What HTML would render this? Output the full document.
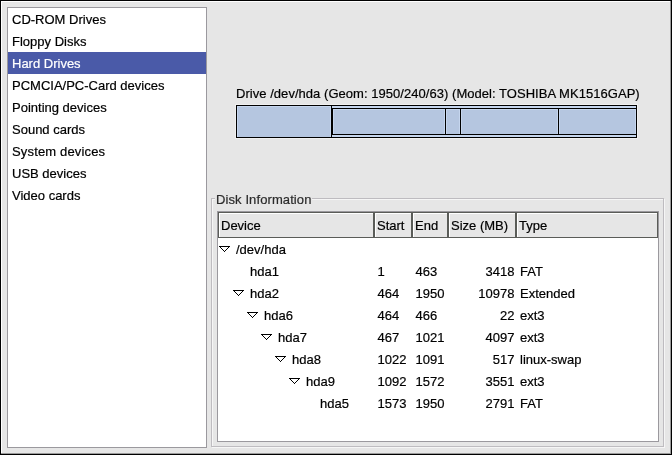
<!DOCTYPE html>
<html><head><meta charset="utf-8">
<style>
html,body{margin:0;padding:0}
body{will-change:transform;width:672px;height:455px;position:relative;overflow:hidden;background:#e6e6e6;font-family:"Liberation Sans",sans-serif;font-size:13px;color:#000}
.a{position:absolute}
.t{position:absolute;white-space:pre;line-height:22px;height:22px;-webkit-text-stroke:0.2px currentColor}
.r{text-align:right}
.hb{position:absolute;top:212px;height:24px;border:1px solid #5a5c58;background:#e6e6e6;box-shadow:1px 1px 0 #fff inset}
</style></head><body>
<div class="a" style="left:0px;top:0px;width:672px;height:1px;background:#000"></div>
<div class="a" style="left:0px;top:0px;width:1px;height:455px;background:#000"></div>
<div class="a" style="left:0px;top:454px;width:672px;height:1px;background:#000"></div>
<div class="a" style="left:671px;top:0px;width:1px;height:455px;background:#000"></div>
<div class="a" style="left:1px;top:1px;width:670px;height:1px;background:#fff"></div>
<div class="a" style="left:1px;top:1px;width:1px;height:453px;background:#fff"></div>
<div class="a" style="left:670px;top:1px;width:1px;height:453px;background:#9a9a9a"></div>
<div class="a" style="left:1px;top:453px;width:670px;height:1px;background:#9a9a9a"></div>
<div class="a" style="left:7px;top:7px;width:198px;height:439px;border:1px solid #9b999e;background:#fff"></div>
<div class="a" style="left:8px;top:52px;width:198px;height:22px;background:#4a5aa8"></div>
<div class="t" style="left:12px;top:9px;">CD-ROM Drives</div>
<div class="t" style="left:12px;top:31px;">Floppy Disks</div>
<div class="t" style="left:12px;top:53px;color:#fff">Hard Drives</div>
<div class="t" style="left:12px;top:75px;">PCMCIA/PC-Card devices</div>
<div class="t" style="left:12px;top:97px;">Pointing devices</div>
<div class="t" style="left:12px;top:119px;">Sound cards</div>
<div class="t" style="left:12px;top:141px;letter-spacing:0.16px">System devices</div>
<div class="t" style="left:12px;top:163px;">USB devices</div>
<div class="t" style="left:12px;top:185px;">Video cards</div>
<div class="t" style="left:236px;top:83px;letter-spacing:0.04px">Drive /dev/hda (Geom: 1950/240/63) (Model: TOSHIBA MK1516GAP)</div>
<svg class="a" style="left:0;top:0" width="672" height="455" shape-rendering="crispEdges"><rect x="235" y="104" width="403" height="35" fill="#f0f0f0"/><rect x="236" y="105" width="401" height="33" fill="#000"/><rect x="237" y="106" width="94" height="31" fill="#c6d6ee"/><rect x="238" y="107" width="92" height="30" fill="#b5c6e0"/><rect x="332" y="106" width="304" height="31" fill="#c6d6ee"/><rect x="332" y="108" width="305" height="27" fill="#000"/><rect x="333" y="109" width="112" height="25" fill="#c6d6ee"/><rect x="334" y="110" width="110" height="24" fill="#b5c6e0"/><rect x="446" y="109" width="14" height="25" fill="#c6d6ee"/><rect x="447" y="110" width="12" height="24" fill="#b5c6e0"/><rect x="461" y="109" width="97" height="25" fill="#c6d6ee"/><rect x="462" y="110" width="95" height="24" fill="#b5c6e0"/><rect x="559" y="109" width="77" height="25" fill="#c6d6ee"/><rect x="560" y="110" width="75" height="24" fill="#b5c6e0"/></svg>
<div class="a" style="left:211px;top:198px;width:451px;height:247px;border:1px solid #bebcc0;box-shadow:1px 1px 0 #f6f6f6 inset, 1px 1px 0 #f6f6f6"></div>
<div class="a" style="left:215px;top:190px;width:97px;height:16px;background:#e6e6e6"></div>
<div class="t" style="left:216px;top:189px;color:#2a2a2a;letter-spacing:0.1px">Disk Information</div>
<div class="a" style="left:217px;top:211px;width:440px;height:229px;border:1px solid #9b999e;background:#fff"></div>
<div class="hb" style="left:218px;width:154px"></div>
<div class="hb" style="left:374px;width:36px"></div>
<div class="hb" style="left:412px;width:34px"></div>
<div class="hb" style="left:448px;width:66px"></div>
<div class="hb" style="left:516px;width:140px"></div>
<div class="t" style="left:221px;top:215px;">Device</div>
<div class="t" style="left:377px;top:215px;">Start</div>
<div class="t" style="left:415px;top:215px;">End</div>
<div class="t" style="left:451px;top:215px;">Size (MB)</div>
<div class="t" style="left:519px;top:215px;">Type</div>
<div class="t" style="left:236px;top:239px;">/dev/hda</div>
<div class="t" style="left:250px;top:261px;">hda1</div>
<div class="t" style="left:377.5px;top:261px;">1</div>
<div class="t" style="left:415.5px;top:261px;">463</div>
<div class="t r" style="left:444px;top:261px;width:70.5px">3418</div>
<div class="t" style="left:520px;top:261px;">FAT</div>
<div class="t" style="left:250px;top:283px;">hda2</div>
<div class="t" style="left:377.5px;top:283px;">464</div>
<div class="t" style="left:415.5px;top:283px;">1950</div>
<div class="t r" style="left:444px;top:283px;width:70.5px">10978</div>
<div class="t" style="left:520px;top:283px;">Extended</div>
<div class="t" style="left:264px;top:305px;">hda6</div>
<div class="t" style="left:377.5px;top:305px;">464</div>
<div class="t" style="left:415.5px;top:305px;">466</div>
<div class="t r" style="left:444px;top:305px;width:70.5px">22</div>
<div class="t" style="left:520px;top:305px;">ext3</div>
<div class="t" style="left:278px;top:327px;">hda7</div>
<div class="t" style="left:377.5px;top:327px;">467</div>
<div class="t" style="left:415.5px;top:327px;">1021</div>
<div class="t r" style="left:444px;top:327px;width:70.5px">4097</div>
<div class="t" style="left:520px;top:327px;">ext3</div>
<div class="t" style="left:292px;top:349px;">hda8</div>
<div class="t" style="left:377.5px;top:349px;">1022</div>
<div class="t" style="left:415.5px;top:349px;">1091</div>
<div class="t r" style="left:444px;top:349px;width:70.5px">517</div>
<div class="t" style="left:520px;top:349px;">linux-swap</div>
<div class="t" style="left:306px;top:371px;">hda9</div>
<div class="t" style="left:377.5px;top:371px;">1092</div>
<div class="t" style="left:415.5px;top:371px;">1572</div>
<div class="t r" style="left:444px;top:371px;width:70.5px">3551</div>
<div class="t" style="left:520px;top:371px;">ext3</div>
<div class="t" style="left:320px;top:393px;">hda5</div>
<div class="t" style="left:377.5px;top:393px;">1573</div>
<div class="t" style="left:415.5px;top:393px;">1950</div>
<div class="t r" style="left:444px;top:393px;width:70.5px">2791</div>
<div class="t" style="left:520px;top:393px;">FAT</div>
<svg class="a" style="left:0;top:0" width="672" height="455" shape-rendering="crispEdges"><g fill="#000"><rect x="219" y="246" width="11" height="1"/><rect x="220" y="247" width="1" height="1"/><rect x="221" y="248" width="1" height="1"/><rect x="222" y="249" width="1" height="1"/><rect x="223" y="250" width="1" height="1"/><rect x="224" y="251" width="1" height="1"/><rect x="228" y="247" width="1" height="1"/><rect x="227" y="248" width="1" height="1"/><rect x="226" y="249" width="1" height="1"/><rect x="225" y="250" width="1" height="1"/><rect x="233" y="290" width="11" height="1"/><rect x="234" y="291" width="1" height="1"/><rect x="235" y="292" width="1" height="1"/><rect x="236" y="293" width="1" height="1"/><rect x="237" y="294" width="1" height="1"/><rect x="238" y="295" width="1" height="1"/><rect x="242" y="291" width="1" height="1"/><rect x="241" y="292" width="1" height="1"/><rect x="240" y="293" width="1" height="1"/><rect x="239" y="294" width="1" height="1"/><rect x="247" y="312" width="11" height="1"/><rect x="248" y="313" width="1" height="1"/><rect x="249" y="314" width="1" height="1"/><rect x="250" y="315" width="1" height="1"/><rect x="251" y="316" width="1" height="1"/><rect x="252" y="317" width="1" height="1"/><rect x="256" y="313" width="1" height="1"/><rect x="255" y="314" width="1" height="1"/><rect x="254" y="315" width="1" height="1"/><rect x="253" y="316" width="1" height="1"/><rect x="261" y="334" width="11" height="1"/><rect x="262" y="335" width="1" height="1"/><rect x="263" y="336" width="1" height="1"/><rect x="264" y="337" width="1" height="1"/><rect x="265" y="338" width="1" height="1"/><rect x="266" y="339" width="1" height="1"/><rect x="270" y="335" width="1" height="1"/><rect x="269" y="336" width="1" height="1"/><rect x="268" y="337" width="1" height="1"/><rect x="267" y="338" width="1" height="1"/><rect x="275" y="356" width="11" height="1"/><rect x="276" y="357" width="1" height="1"/><rect x="277" y="358" width="1" height="1"/><rect x="278" y="359" width="1" height="1"/><rect x="279" y="360" width="1" height="1"/><rect x="280" y="361" width="1" height="1"/><rect x="284" y="357" width="1" height="1"/><rect x="283" y="358" width="1" height="1"/><rect x="282" y="359" width="1" height="1"/><rect x="281" y="360" width="1" height="1"/><rect x="289" y="378" width="11" height="1"/><rect x="290" y="379" width="1" height="1"/><rect x="291" y="380" width="1" height="1"/><rect x="292" y="381" width="1" height="1"/><rect x="293" y="382" width="1" height="1"/><rect x="294" y="383" width="1" height="1"/><rect x="298" y="379" width="1" height="1"/><rect x="297" y="380" width="1" height="1"/><rect x="296" y="381" width="1" height="1"/><rect x="295" y="382" width="1" height="1"/></g></svg>
</body></html>
